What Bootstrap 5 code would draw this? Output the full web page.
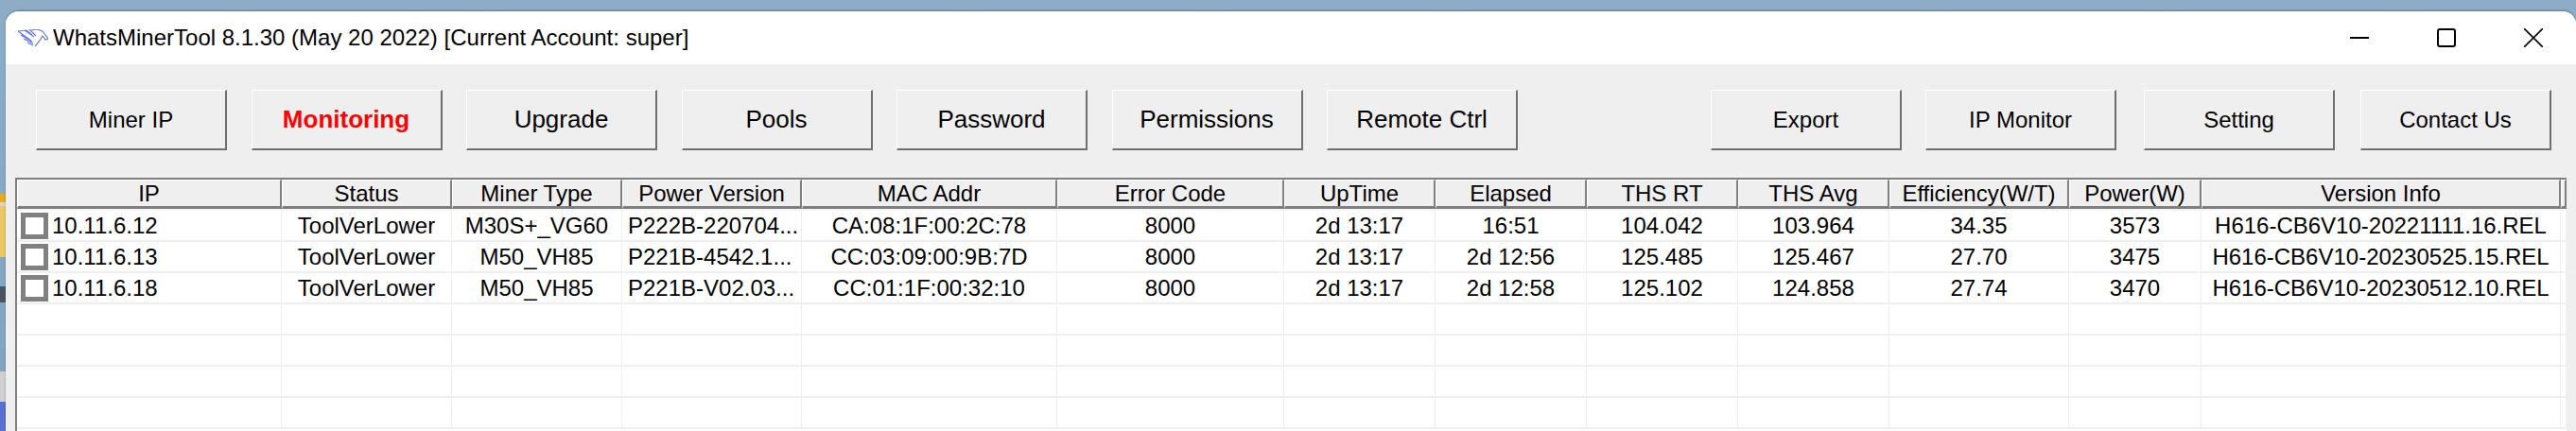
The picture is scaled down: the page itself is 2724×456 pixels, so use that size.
<!doctype html>
<html lang="en">

<head>
    <meta charset="UTF-8">
    <title>WhatsMinerTool</title>
    <link href="https://cdn.jsdelivr.net/npm/bootstrap@5.3.3/dist/css/bootstrap.min.css" rel="stylesheet">
    <style>
        html, body { height: 456px; overflow: hidden; }
        body {
            background: linear-gradient(#8dadc7, #7fa3bf);
            padding: 12px 0 0 6px;
            font-family: "Liberation Sans", Arial, sans-serif;
            color: #000;
        }
        /* bits of the desktop showing left of the window */
        .desk-folder { position: absolute; left: 0; top: 205px; width: 6px; height: 67px; background: linear-gradient(#e8a91c 0 9px, #d9d5c8 9px 13px, #eac766 13px); }
        .desk-label { position: absolute; left: 0; top: 303px; width: 6px; height: 17px; background: #4a5560; }
        .desk-shot { position: absolute; left: 0; top: 393px; width: 6px; height: 63px; background: linear-gradient(#cfd0d2 0 32px, #5b6fd0 32px); }
        .app-window { position: relative; height: 444px; background: #efefef; border-radius: 14px 14px 0 0; overflow: hidden; box-shadow: 0 -1px 2px rgba(40, 50, 60, .45); }
        .title-bar { height: 56px; background: #fff; font-size: 24px; padding-left: 13px; }
        .app-logo { width: 32px; height: 18px; margin-right: 5px; }
        .win-btns { gap: 72px; padding-right: 35px; }
        .toolbar { padding: 27px 26px 0 32px; height: 120px; }
        .tool-btn {
            width: 202px; height: 64px; background: #efefef; font-size: 24px; color: #000;
            border: 1px solid #fff; border-right: 2px solid #6f6f6f; border-bottom: 2px solid #6f6f6f; padding: 0;
        }
        .tool-btn.is-tab { font-size: 26px; }
        .tool-btn.is-active { color: #f00; font-weight: 700; }
        .left-tools { gap: 25.5px; }
        .right-tools { gap: 25px; }
        .right-tools .tool-wide { margin-left: 4px; margin-right: 2px; }
        .miner-grid-wrap { margin-left: 10px; width: 2698px; height: 268px; overflow: hidden; background: #fff; border-top: 2px solid #7f7f7f; border-left: 2px solid #7f7f7f; }
        .miner-grid { table-layout: fixed; width: 2696px; border-collapse: separate; border-spacing: 0; font-size: 24px; }
        .miner-grid th { height: 31px; padding: 0; background: #efefef; font-weight: 400; text-align: center; border-right: 2px solid #7f7f7f; border-bottom: 3px solid #7f7f7f; border-top: 1px solid #fff; border-left: 1px solid #fff; line-height: 26px; }
        .miner-grid td { height: 33px; padding: 0 6px; text-align: center; border-right: 1px solid #efefef; border-bottom: 2px solid #efefef; white-space: nowrap; overflow: hidden; line-height: 28px; }
        .miner-grid td.ip-cell { padding: 0 0 0 4px; }
        .miner-grid td.pw-cell { text-align: left; }
        .row-check { width: 29px; height: 28px; border: 5px solid #808080; background: #fff; margin-right: 4px; }
        .miner-grid .gap-row td { height: 2px; line-height: 2px; padding: 0; border: 0; background: #f6f6f6; }
    </style>
</head>

<body>
    <span class="desk-folder"></span>
    <span class="desk-label"></span>
    <span class="desk-shot"></span>
    <div class="app-window d-flex flex-column">
        <div class="title-bar d-flex align-items-center justify-content-between">
            <div class="d-flex align-items-center">
                <svg class="app-logo" viewBox="0 0 32 18" fill="none" stroke="#6a78e0" stroke-width="1.2">
                    <path d="M0 2l14 10M3 6l12 7M6 10l10 5M10 14l6 3"/>
                    <path d="M0 2l9-1 6 5M7 1l10 7M12 0l7 7"/>
                    <path d="M14 1l6-1 6 2 6 8-3 1-3-4-3 5-5 6"/>
                </svg>
                <span>WhatsMinerTool 8.1.30 (May 20 2022) [Current Account: super]</span>
            </div>
            <div class="win-btns d-flex align-items-center">
                <svg width="20" height="20" viewBox="0 0 20 20"><path d="M0 10h20" stroke="#000" stroke-width="2"/></svg>
                <svg width="20" height="20" viewBox="0 0 20 20"><rect x="1" y="1" width="18" height="18" rx="2" fill="none" stroke="#000" stroke-width="2"/></svg>
                <svg width="20" height="20" viewBox="0 0 20 20"><path d="M0 0l20 20M20 0L0 20" stroke="#000" stroke-width="1.6"/></svg>
            </div>
        </div>
        <div class="toolbar d-flex justify-content-between">
            <div class="left-tools d-flex">
                <button class="btn rounded-0 tool-btn">Miner IP</button>
                <button class="btn rounded-0 tool-btn is-tab is-active">Monitoring</button>
                <button class="btn rounded-0 tool-btn is-tab">Upgrade</button>
                <button class="btn rounded-0 tool-btn is-tab">Pools</button>
                <button class="btn rounded-0 tool-btn is-tab">Password</button>
                <button class="btn rounded-0 tool-btn is-tab">Permissions</button>
                <button class="btn rounded-0 tool-btn is-tab">Remote Ctrl</button>
            </div>
            <div class="right-tools d-flex">
                <button class="btn rounded-0 tool-btn">Export</button>
                <button class="btn rounded-0 tool-btn">IP Monitor</button>
                <button class="btn rounded-0 tool-btn tool-wide">Setting</button>
                <button class="btn rounded-0 tool-btn">Contact Us</button>
            </div>
        </div>
        <div class="miner-grid-wrap">
            <table class="miner-grid" id="grid"></table>
        </div>
    </div>

    <script>
        const widths = [280, 180, 180, 190, 270, 240, 160, 160, 160, 160, 190, 140, 380];
        const heads = ['IP', 'Status', 'Miner Type', 'Power Version', 'MAC Addr', 'Error Code', 'UpTime', 'Elapsed', 'THS RT', 'THS Avg', 'Efficiency(W/T)', 'Power(W)', 'Version Info'];
        const rows = [
            ['10.11.6.12', 'ToolVerLower', 'M30S+_VG60', 'P222B-220704...', 'CA:08:1F:00:2C:78', '8000', '2d 13:17', '16:51', '104.042', '103.964', '34.35', '3573', 'H616-CB6V10-20221111.16.REL'],
            ['10.11.6.13', 'ToolVerLower', 'M50_VH85', 'P221B-4542.1...', 'CC:03:09:00:9B:7D', '8000', '2d 13:17', '2d 12:56', '125.485', '125.467', '27.70', '3475', 'H616-CB6V10-20230525.15.REL'],
            ['10.11.6.18', 'ToolVerLower', 'M50_VH85', 'P221B-V02.03...', 'CC:01:1F:00:32:10', '8000', '2d 13:17', '2d 12:58', '125.102', '124.858', '27.74', '3470', 'H616-CB6V10-20230512.10.REL']
        ];
        let html = '<colgroup>' + widths.map(w => `<col style="width:${w}px">`).join('') + '<col></colgroup>';
        html += '<thead><tr>' + heads.map(h => `<th>${h}</th>`).join('') + '<th></th></tr></thead><tbody>';
        html += '<tr class="gap-row"><td colspan="14"></td></tr>';
        for (let i = 0; i < 7; i++) {
            const r = rows[i];
            html += '<tr>';
            for (let c = 0; c < 13; c++) {
                let cls = c === 0 ? 'ip-cell' : (c === 3 ? 'pw-cell' : '');
                let inner = r ? r[c] : '';
                if (r && c === 0) inner = `<div class="d-flex align-items-center"><span class="row-check"></span>${r[c]}</div>`;
                html += `<td class="${cls}">${inner}</td>`;
            }
            html += '<td></td></tr>';
        }
        document.getElementById('grid').innerHTML = html + '</tbody>';
    </script>
    <script src="https://cdn.jsdelivr.net/npm/bootstrap@5.3.3/dist/js/bootstrap.bundle.min.js"></script>
</body>

</html>
